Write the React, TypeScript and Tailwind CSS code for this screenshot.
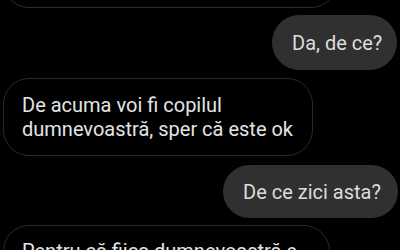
import React from "react";

const font = { fontFamily: "Roboto, 'Noto Sans', sans-serif" };

export default function App() {
  return (
    <div
      className="w-[400px] h-[250px] overflow-hidden bg-black flex flex-col text-[20px] leading-[24px] text-[#e4e4e4]"
      style={font}
    >
      {/* top received bubble (cut off) */}
      <div className="shrink-0 mt-[-70px] ml-[3px] w-[334px] h-[78px] rounded-[26px] border-[1.5px] border-[#2a2a2a]" />

      {/* sent: Da, de ce? */}
      <div className="shrink-0 mt-[7px] self-end mr-[3px] h-[55px] w-[125px] rounded-full bg-[#303030] flex items-center pl-[20px] text-[#dcdcdc]">
        Da, de ce?
      </div>

      {/* received */}
      <div className="shrink-0 mt-[8px] ml-[3px] w-[310px] rounded-[26px] border-[1.5px] border-[#2a2a2a] pl-[18px] py-[14px]">
        <div>De acuma voi fi copilul</div>
        <div>dumnevoastră, sper că este ok</div>
      </div>

      {/* sent: De ce zici asta? */}
      <div className="shrink-0 mt-[9px] self-end mr-[2px] h-[53px] w-[175px] rounded-full bg-[#303030] flex items-center pl-[20px] text-[#dcdcdc]">
        De ce zici asta?
      </div>

      {/* received (cut off) */}
      <div className="shrink-0 mt-[7px] ml-[3px] w-[327px] h-[90px] rounded-[26px] border-[1.5px] border-[#2a2a2a] pl-[18px] pt-[13px]">
        <div>Pentru că fiica dumnevoastră e</div>
      </div>
    </div>
  );
}
